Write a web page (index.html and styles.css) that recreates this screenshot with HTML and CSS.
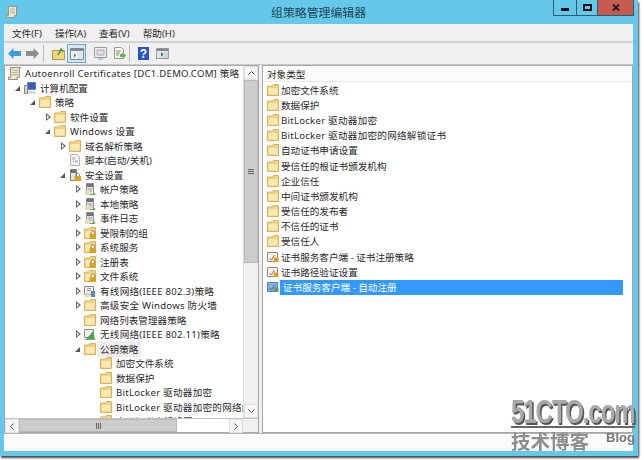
FILE: index.html
```html
<!DOCTYPE html>
<html lang="zh-CN">
<head>
  <meta charset="UTF-8">
  <title>组策略管理编辑器</title>
  <link rel="stylesheet" href="styles.css">
</head>
<body>
  <svg class="defs" width="0" height="0">
    <symbol id="folder" viewBox="0 0 12 12">
      <path d="M.5 2v9.500h11V.5h-5l-1 1.500z" fill="#f3d27e" stroke="#d6b25e"/>
      <path d="M1.500 4h9v6.500h-9z" fill="#fce9b2"/>
    </symbol>
    <symbol id="lockfolder" viewBox="0 0 12 12">
      <path d="M.5 2v9.500h11V.5h-5l-1 1.500z" fill="#f3d27e" stroke="#d6b25e"/>
      <path d="M1.500 4h9v6.500h-9z" fill="#fce9b2"/>
      <path d="M7 7V5.500a1.800 1.800 0 0 1 3.600 0V7" fill="none" stroke="#8a8a78"/>
      <rect x="5.500" y="7" width="6.500" height="5" fill="#d9a520"/>
    </symbol>
    <symbol id="doc" viewBox="0 0 12 12">
      <path d="M1.500.5h7l2 2v9h-9z" fill="#f4f4f4" stroke="#b4b4b4"/>
      <path d="M3.500 3.500h2v2h-2zM6.500 6.500h2v2h-2zM3.500 7.500h2" fill="none" stroke="#c0c0c0"/>
    </symbol>
    <symbol id="server" viewBox="0 0 12 12">
      <path d="M2.500.5h7v11h-7z" fill="#dfe2e4" stroke="#8c8c8c"/>
      <path d="M3 1h6v3H3z" fill="#70767c"/>
      <path d="M4 6h4M4 8h4" stroke="#999"/>
      <rect x="1" y="7" width="5" height="5" fill="#e6dcb4"/>
      <rect x="9" y="10" width="2" height="2" fill="#38c838"/>
    </symbol>
    <symbol id="lockserver" viewBox="0 0 12 12">
      <path d="M1.500.5h6v11h-6z" fill="#e4e4e4" stroke="#7c7c7c"/>
      <path d="M2 1h5v3H2z" fill="#70767c"/>
      <path d="M7 7V5.500a1.800 1.800 0 0 1 3.400 0V7" fill="none" stroke="#7a7a6a"/>
      <rect x="5.500" y="7" width="6.500" height="5" fill="#d9a520"/>
    </symbol>
    <symbol id="net" viewBox="0 0 12 12">
      <path d="M.5 1.500h9v8h-9z" fill="#eee" stroke="#8c8c8c"/>
      <path d="M2 11l4-4 3-4 2 8z" fill="#4aa84a"/>
      <path d="M.5 11.500h11" stroke="#999"/>
    </symbol>
    <symbol id="wired" viewBox="0 0 12 12">
      <path d="M.5 1.500h9v8h-9z" fill="#eee" stroke="#8c8c8c"/>
      <path d="M3 3.500h4M3 5.500h4" stroke="#999"/>
      <rect x="7" y="6" width="4" height="6" fill="#5a8ab8"/>
      <rect x="1" y="8" width="5" height="4" fill="#e2d8b0"/>
    </symbol>
    <symbol id="cert" viewBox="0 0 12 12">
      <path d="M.5 1.500h10v9H.5z" fill="#f6f2ea" stroke="#8a8a8a"/>
      <path d="M2.500 7l2 2 3-5" fill="none" stroke="#c85040"/>
      <rect x="7" y="6.500" width="4.500" height="4.500" fill="#dca020"/>
    </symbol>
    <symbol id="certsel" viewBox="0 0 12 12">
      <path d="M.5 1.500h10v9H.5z" fill="#7fb0e0" stroke="#5a7ea8"/>
      <path d="M2.500 7l2 2 3-5" fill="none" stroke="#4a6a90"/>
      <rect x="7" y="6.500" width="4.500" height="4.500" fill="#6f8f80"/>
    </symbol>
    <symbol id="policy" viewBox="0 0 12 12">
      <path d="M2.500.5h9l-1 1v8h-2v2H.5v-2h2z" fill="#efe8d0" stroke="#9a9480"/>
      <path d="M4 3h5M4 5h5M4 7h5" stroke="#b8b098"/>
    </symbol>
    <symbol id="computer" viewBox="0 0 12 12">
      <path d="M3.500.5h8v7h-8z" fill="#2f5fc0" stroke="#6f7f9f"/>
      <path d="M.5 3.500h3v8h-3z" fill="#d8d8d8" stroke="#858585"/>
      <path d="M4 9.500h7.500v2H4z" fill="#c8c8c8"/>
    </symbol>
  </svg>

  <div class="window">
    <div class="titlebar">
      <svg class="appicon" width="12" height="12"><use href="#policy"/></svg>
      <span class="title">组策略管理编辑器</span>
      <div class="winbtns">
        <span class="winbtn wb-min"><i class="min"></i></span>
        <span class="winbtn wb-max"><i class="max"></i></span>
        <span class="winbtn close">
          <svg width="8" height="7" viewBox="0 0 8 7"><path d="M1 .5l6 6M7 .5l-6 6" stroke="#1c1c1c" stroke-width="1.800"/></svg>
        </span>
      </div>
    </div>

    <div class="client">
      <div class="menubar">
        <span>文件(F)</span><span>操作(A)</span><span>查看(V)</span><span>帮助(H)</span>
      </div>

      <div class="toolbar">
        <svg width="13" height="11" viewBox="0 0 13 11"><path d="M0 5.500L5.500 0v3H13v5H5.500v3z" fill="#3d9be0"/></svg>
        <svg class="forward" width="13" height="11" viewBox="0 0 13 11"><path d="M13 5.500L7.500 0v3H0v5h7.500v3z" fill="#8d8d8d"/></svg>
        <i class="sep"></i>
        <svg width="13" height="12" viewBox="0 0 13 12">
          <path d="M.5 2.500h12v9H.5z" fill="#f3d27c" stroke="#b8964c"/>
          <path d="M6 7l3-6 2 3" fill="none" stroke="#3a9a3a" stroke-width="1.500"/>
        </svg>
        <span class="tbpressed">
          <svg width="14" height="12" viewBox="0 0 14 12">
            <path d="M.5.5h13v11H.5z" fill="#eef" stroke="#888"/>
            <path d="M1 1h12v2H1z" fill="#7a8a9a"/>
            <path d="M8 4h5v7H8z" fill="#dfe6ea"/>
            <path d="M6 7.500l-2-2v4z" fill="#2a8a4a"/>
          </svg>
        </span>
        <svg class="props" width="13" height="13" viewBox="0 0 13 13">
          <path d="M.5.5h12v10H.5z" fill="#eee" stroke="#999"/>
          <path d="M3 3h7v5H3z" fill="#ddd" stroke="#aaa"/>
          <path d="M4 12h5" stroke="#5ab0e0"/>
        </svg>
        <svg class="export" width="13" height="13" viewBox="0 0 13 13">
          <path d="M1.500.5h7l2 2v9h-9z" fill="#fdf8e4" stroke="#999"/>
          <path d="M3 4h5M3 6h4M3 8h3" stroke="#888"/>
          <path d="M13 8.500L9.500 5v2H7v3h2.500v2z" fill="#5ab83a"/>
        </svg>
        <i class="sep sep2"></i>
        <svg width="11" height="13" viewBox="0 0 11 13">
          <rect width="11" height="13" fill="#2a52c8"/>
          <text x="5.500" y="11" text-anchor="middle" font-size="12" font-weight="700" fill="#fff" font-family="Liberation Sans, sans-serif">?</text>
        </svg>
        <svg class="panel" width="13" height="11" viewBox="0 0 13 11">
          <path d="M.5.5h12v10H.5z" fill="#e4e6ea" stroke="#999"/>
          <path d="M1 1h11v2H1z" fill="#7a8a9a"/>
          <path d="M5 4v5l2.500-2.500z" fill="#2a8a4a"/>
          <path d="M8 4h4v6H8z" fill="#cfd6da"/>
        </svg>
      </div>

      <div class="panes">
        <div class="leftpane">
          <div class="treeview">
            <ul class="tree">
              <li class="l0 wide"><b></b><svg width="13" height="13"><use href="#policy"/></svg><span>Autoenroll Certificates [DC1.DEMO.COM] 策略</span></li>
              <li class="l1"><b class="open"></b><svg width="12" height="12"><use href="#computer"/></svg><span>计算机配置</span></li>
              <li class="l2"><b class="open"></b><svg width="12" height="12"><use href="#folder"/></svg><span>策略</span></li>
              <li class="l3"><b class="closed"></b><svg width="12" height="12"><use href="#folder"/></svg><span>软件设置</span></li>
              <li class="l3 wide"><b class="open"></b><svg width="12" height="12"><use href="#folder"/></svg><span>Windows 设置</span></li>
              <li class="l4"><b class="closed"></b><svg width="12" height="12"><use href="#folder"/></svg><span>域名解析策略</span></li>
              <li class="l4"><b></b><svg width="12" height="12"><use href="#doc"/></svg><span>脚本(启动/关机)</span></li>
              <li class="l4"><b class="open"></b><svg width="12" height="12"><use href="#lockserver"/></svg><span>安全设置</span></li>
              <li class="l5"><b class="closed"></b><svg width="12" height="12"><use href="#server"/></svg><span>帐户策略</span></li>
              <li class="l5"><b class="closed"></b><svg width="12" height="12"><use href="#server"/></svg><span>本地策略</span></li>
              <li class="l5"><b class="closed"></b><svg width="12" height="12"><use href="#server"/></svg><span>事件日志</span></li>
              <li class="l5"><b class="closed"></b><svg width="12" height="12"><use href="#lockfolder"/></svg><span>受限制的组</span></li>
              <li class="l5"><b class="closed"></b><svg width="12" height="12"><use href="#lockfolder"/></svg><span>系统服务</span></li>
              <li class="l5"><b class="closed"></b><svg width="12" height="12"><use href="#lockfolder"/></svg><span>注册表</span></li>
              <li class="l5"><b class="closed"></b><svg width="12" height="12"><use href="#lockfolder"/></svg><span>文件系统</span></li>
              <li class="l5 wide"><b class="closed"></b><svg width="12" height="12"><use href="#wired"/></svg><span>有线网络(IEEE 802.3)策略</span></li>
              <li class="l5 wide"><b class="closed"></b><svg width="12" height="12"><use href="#folder"/></svg><span>高级安全 Windows 防火墙</span></li>
              <li class="l5"><b></b><svg width="12" height="12"><use href="#folder"/></svg><span>网络列表管理器策略</span></li>
              <li class="l5 wide"><b class="closed"></b><svg width="12" height="12"><use href="#net"/></svg><span>无线网络(IEEE 802.11)策略</span></li>
              <li class="l5 current"><b class="open"></b><svg width="12" height="12"><use href="#folder"/></svg><span>公钥策略</span></li>
              <li class="l6"><b></b><svg width="12" height="12"><use href="#folder"/></svg><span>加密文件系统</span></li>
              <li class="l6"><b></b><svg width="12" height="12"><use href="#folder"/></svg><span>数据保护</span></li>
              <li class="l6 wide"><b></b><svg width="12" height="12"><use href="#folder"/></svg><span>BitLocker 驱动器加密</span></li>
              <li class="l6 wide"><b></b><svg width="12" height="12"><use href="#folder"/></svg><span>BitLocker 驱动器加密的网络解锁证书</span></li>
              <li class="l6"><b></b><svg width="12" height="12"><use href="#folder"/></svg><span>自动证书申请设置</span></li>
            </ul>
            <div class="vscroll">
              <span class="sbtn"><svg width="7" height="4" viewBox="0 0 7 4"><path d="M.5 3.500l3-3 3 3" fill="none" stroke="#555"/></svg></span>
              <span class="vthumb"><i></i><i></i><i></i></span>
              <span class="vtrack"></span>
              <span class="sbtn"><svg width="7" height="4" viewBox="0 0 7 4"><path d="M.5.5l3 3 3-3" fill="none" stroke="#555"/></svg></span>
            </div>
          </div>
          <div class="hscroll">
            <span class="sbtn"><svg width="4" height="7" viewBox="0 0 4 7"><path d="M3.500.5l-3 3 3 3" fill="none" stroke="#555"/></svg></span>
            <span class="hthumb"><i></i><i></i><i></i></span>
            <span class="htrack"></span>
            <span class="sbtn"><svg width="4" height="7" viewBox="0 0 4 7"><path d="M.5.5l3 3-3 3" fill="none" stroke="#555"/></svg></span>
            <span class="corner"></span>
          </div>
        </div>

        <div class="rightpane">
          <div class="listhead"><span>对象类型</span></div>
          <ul class="list">
            <li><svg width="12" height="12"><use href="#folder"/></svg><span>加密文件系统</span></li>
            <li><svg width="12" height="12"><use href="#folder"/></svg><span>数据保护</span></li>
            <li class="wide"><svg width="12" height="12"><use href="#folder"/></svg><span>BitLocker 驱动器加密</span></li>
            <li class="wide"><svg width="12" height="12"><use href="#folder"/></svg><span>BitLocker 驱动器加密的网络解锁证书</span></li>
            <li><svg width="12" height="12"><use href="#folder"/></svg><span>自动证书申请设置</span></li>
            <li><svg width="12" height="12"><use href="#folder"/></svg><span>受信任的根证书颁发机构</span></li>
            <li><svg width="12" height="12"><use href="#folder"/></svg><span>企业信任</span></li>
            <li><svg width="12" height="12"><use href="#folder"/></svg><span>中间证书颁发机构</span></li>
            <li><svg width="12" height="12"><use href="#folder"/></svg><span>受信任的发布者</span></li>
            <li><svg width="12" height="12"><use href="#folder"/></svg><span>不信任的证书</span></li>
            <li><svg width="12" height="12"><use href="#folder"/></svg><span>受信任人</span></li>
            <li><svg width="12" height="12"><use href="#cert"/></svg><span>证书服务客户端 - 证书注册策略</span></li>
            <li><svg width="12" height="12"><use href="#cert"/></svg><span>证书路径验证设置</span></li>
            <li class="selected"><svg width="12" height="12"><use href="#certsel"/></svg><span>证书服务客户端 - 自动注册</span></li>
          </ul>
        </div>
      </div>

      <div class="statusbar"></div>
    </div>
  </div>

  <div class="watermark">
    <div class="wm-logo">51CTO.com</div>
    <div class="wm-sub"><span>技术博客</span><small>Blog</small></div>
  </div>
</body>
</html>
```

FILE: styles.css
```css
* { box-sizing: border-box; }
html, body { margin: 0; height: 100%; }
body {
  width: 644px;
  height: 460px;
  overflow: hidden;
  position: relative;
  background: #fff;
  font-family: "Noto Sans", "Noto Sans CJK SC", sans-serif;
  font-size: 9.600px;
  color: #2a2a2a;
}
.defs { position: absolute; }
ul { list-style: none; margin: 0; padding: 0; }
svg { display: block; flex: none; }
.wide span { letter-spacing: .25px; }

.window {
  width: 638px;
  height: 456px;
  background: #63c8e9;
  padding: 0 5px 5px 4px;
  display: flex;
  flex-direction: column;
  box-shadow: 1px 2px 2px #444;
  filter: blur(.3px);
}

.titlebar {
  height: 24px;
  flex: none;
  display: flex;
  align-items: flex-start;
  position: relative;
}
.appicon { margin: 6px 0 0 2px; }
.title {
  position: absolute;
  left: 267px;
  top: 3px;
  font-size: 11.900px;
  color: #1d3a48;
}
.winbtns { margin-left: auto; display: flex; height: 16px; border: 1px solid #35586b; border-top: 0; margin-right: -1px; }
.winbtn {
  display: flex;
  align-items: center;
  justify-content: center;
  border-right: 1px solid #35586b;
}
.wb-min { width: 23px; }
.wb-max { width: 21px; }
.winbtn.close { width: 35px; background: #c75b50; border-right: 0; }
.min { width: 8px; height: 3px; background: #111; margin-top: 4px; }
.max { width: 9px; height: 7px; border: 2px solid #111; }

.client {
  flex: 1;
  min-height: 0;
  display: flex;
  flex-direction: column;
  background: #f0f0f0;
}
.menubar {
  height: 19px;
  flex: none;
  display: flex;
  gap: 13px;
  align-items: center;
  padding-left: 8px;
  border-bottom: 2px solid #d4d4d4;
}
.toolbar {
  height: 22px;
  flex: none;
  display: flex;
  align-items: center;
  padding-left: 4px;
  gap: 4px;
  border-bottom: 1px solid #c8c8c8;
}
.toolbar .forward { margin-left: 1px; }
.toolbar .props { margin-left: 4px; }
.toolbar .export { margin-left: 2px; }
.toolbar .panel { margin-left: 3px; }
.sep { width: 1px; height: 17px; background: #bcbcbc; margin-right: 4px; }
.sep2 { margin-left: -1px; }
.tbpressed {
  width: 19px;
  height: 19px;
  margin-left: -2px;
  display: flex;
  align-items: center;
  justify-content: center;
  background: #d5e8f6;
  border: 1px solid #64a8d8;
}

.panes { flex: 1; min-height: 0; display: flex; gap: 3px; }
.leftpane {
  width: 255px;
  display: flex;
  flex-direction: column;
  border: 1px solid #a8a8a8;
  background: #fff;
}
.treeview { flex: 1; min-height: 0; display: flex; }
.tree { flex: 1; min-width: 0; overflow: hidden; }
.tree li {
  height: 14.500px;
  display: flex;
  align-items: center;
  white-space: nowrap;
}
.tree b { width: 6px; height: 14px; flex: none; margin-right: 3px; position: relative; }
.tree b.closed::after {
  content: "";
  position: absolute;
  left: 1px;
  top: 3px;
  border-left: 5px solid #666;
  border-top: 4px solid transparent;
  border-bottom: 4px solid transparent;
}
.tree b.closed::before {
  content: "";
  position: absolute;
  left: 2px;
  top: 5px;
  z-index: 1;
  border-left: 2px solid #fff;
  border-top: 2px solid transparent;
  border-bottom: 2px solid transparent;
}
.tree b.open::after {
  content: "";
  position: absolute;
  left: 0;
  top: 5px;
  border-right: 5px solid #555;
  border-top: 5px solid transparent;
}
.tree span { margin-left: 4px; }
.l0 { padding-left: 1px; }
.l0 b { display: none; }
.l0 svg { margin-left: 2px; }
.l1 { padding-left: 10px; }
.l2 { padding-left: 25px; }
.l3 { padding-left: 40px; }
.l4 { padding-left: 55px; }
.l5 { padding-left: 70px; }
.l6 { padding-left: 86px; }
.tree .current span { background: #eeeeee; padding: 1px 3px; margin-left: 1px; }

.vscroll {
  width: 15px;
  flex: none;
  background: #e8e8e8;
  border-left: 1px solid #dcdcdc;
  display: flex;
  flex-direction: column;
}
.sbtn {
  flex: none;
  width: 14px;
  height: 14px;
  display: flex;
  align-items: center;
  justify-content: center;
  background: #f6f6f6;
  border: 1px solid #e0e0e0;
}
.vthumb {
  height: 183px;
  flex: none;
  background: #cdcdcd;
  border: 1px solid #b8b8b8;
  display: flex;
  flex-direction: column;
  gap: 1px;
  align-items: center;
  justify-content: center;
}
.vthumb i { width: 6px; height: 1px; background: #666; }
.vtrack { flex: 1; background: #f0f0f0; }
.hscroll { height: 14px; flex: none; display: flex; background: #fff; border-top: 1px solid #c4c4c4; }
.hthumb {
  width: 158px;
  flex: none;
  background: #cdcdcd;
  border: 1px solid #b8b8b8;
  display: flex;
  gap: 1px;
  align-items: center;
  justify-content: center;
}
.hthumb i { width: 1px; height: 6px; background: #666; }
.htrack { flex: 1; }
.corner { width: 15px; flex: none; background: #f0f0f0; }

.rightpane { flex: 1; min-width: 0; border: 1px solid #a8a8a8; background: #fff; }
.listhead {
  height: 16px;
  display: flex;
  align-items: center;
  padding-left: 4px;
  background: #fbfbfb;
  border-bottom: 1px solid #e8e8e8;
}
.list li {
  height: 15.200px;
  display: flex;
  align-items: center;
  gap: 2px;
  padding-left: 4px;
  white-space: nowrap;
}
.list li.selected span {
  flex: 1;
  background: #3399ff;
  color: #fff;
  line-height: 15px;
  margin: 0 9px 0 -1px;
  padding-left: 3px;
}

.statusbar { height: 18px; flex: none; background: #fbfbfb; border-top: 1px solid #b4b4b4; }

.watermark {
  position: absolute;
  left: 511px;
  top: 398px;
  width: 124px;
  color: #8e8e8e;
}
.wm-logo {
  font: 700 33px/28px "Liberation Sans", sans-serif;
  letter-spacing: -1.500px;
  white-space: nowrap;
  text-shadow: 2px 2px 0 #555;
  color: #a9a9a9;
  border-bottom: 2px solid #666;
  transform: scaleX(.73);
  transform-origin: left;
  width: 170px;
}
.wm-sub { display: flex; align-items: flex-start; justify-content: space-between; padding-top: 4px; }
.wm-sub span { font-size: 19.500px; line-height: 20px; font-weight: 700; }
.wm-sub small { font: 700 13px/11px "Liberation Sans", sans-serif; color: #777; }
```
